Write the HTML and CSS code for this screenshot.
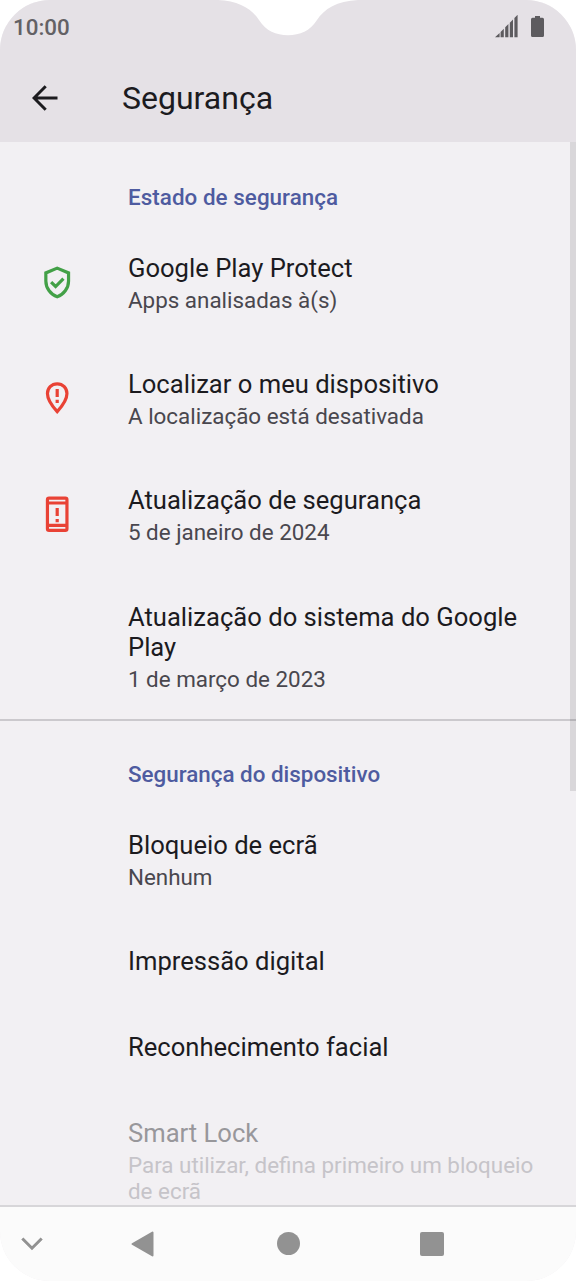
FILE: index.html
```html
<!DOCTYPE html>
<html lang="pt">
<head>
<meta charset="utf-8">
<title>Segurança</title>
<link rel="stylesheet" href="styles.css">
</head>
<body>
<div class="phone">
  <header class="top">
    <div class="status">
      <span class="clock">10:00</span>
      <svg class="signal" width="24" height="24" viewBox="0 0 24 24"><path d="M0 23.2L4.6 19V23.2ZM5.6 18L8.8 14.8V23.2H5.6ZM10.2 13.3L13.4 10V23.2H10.2ZM14.8 8.7L18 5.5V23.2H14.8ZM19.4 4L22.6.8V23.2H19.4Z"/></svg>
      <svg class="battery" width="13" height="22" viewBox="0 0 13 22"><path d="M4 0h5v1.8h2.5Q13 2 13 3.5V19.5Q13 21 11.5 21h-10Q0 21 0 19.5V3.5Q0 2 1.5 1.8H4Z"/></svg>
    </div>
    <div class="appbar">
      <svg class="back" width="26" height="26" viewBox="0 0 26 26"><path d="M25.5 13H2M13.7 1.3L2 13L13.7 24.7"/></svg>
      <h1 class="heading">Segurança</h1>
    </div>
    <svg class="notch" width="140" height="36" viewBox="0 0 140 36"><path d="M0 0C21 1 34 9 41 20C48 31 58 35.2 70 35.2C82 35.2 92 31 99 20C106 9 119 1 140 0Z"/></svg>
  </header>
  <main class="list">
    <section class="group status-group">
      <h2 class="category">Estado de segurança</h2>
      <div class="row">
        <svg class="icon ok" width="38.4" height="38.4" viewBox="0 0 24 24"><path d="M12 3L4.9 6V11C4.9 15.5 8 19.6 12 20.9C16 19.6 19.1 15.5 19.1 11V6Z" transform="translate(0 .2)"/><path d="M8.2 12L11 14.7L15.9 9.8"/></svg>
        <div class="text"><div class="title">Google Play Protect</div><div class="summary">Apps analisadas à(s)</div></div>
      </div>
      <div class="row">
        <svg class="icon bad" width="38.4" height="38.4" viewBox="0 0 24 24"><path d="M12 3C8.4 3 5.9 5.8 5.9 9.1C5.9 12.6 8.4 16.5 12 20.4C15.6 16.5 18.1 12.6 18.1 9.1C18.1 5.8 15.6 3 12 3ZM12 6.3V11.3M12 13V15"/></svg>
        <div class="text"><div class="title">Localizar o meu dispositivo</div><div class="summary">A localização está desativada</div></div>
      </div>
      <div class="row">
        <svg class="icon bad" width="38.4" height="38.4" viewBox="0 0 24 24"><rect x="5.9" y="1.9" width="12.2" height="20.2" rx="1"/><path d="M6 5H18M6 19H18M12 8.1V13.1M12 15V17"/></svg>
        <div class="text"><div class="title">Atualização de segurança</div><div class="summary">5 de janeiro de 2024</div></div>
      </div>
      <div class="row">
        <div class="text"><div class="title">Atualização do sistema do Google Play</div><div class="summary">1 de março de 2023</div></div>
      </div>
    </section>
    <section class="group device">
      <h2 class="category">Segurança do dispositivo</h2>
      <div class="row"><div class="text"><div class="title">Bloqueio de ecrã</div><div class="summary">Nenhum</div></div></div>
      <div class="row single"><div class="text"><div class="title">Impressão digital</div></div></div>
      <div class="row single"><div class="text"><div class="title">Reconhecimento facial</div></div></div>
      <div class="row disabled"><div class="text"><div class="title">Smart Lock</div><div class="summary">Para utilizar, defina primeiro um bloqueio de ecrã</div></div></div>
    </section>
    <div class="scrollbar"></div>
  </main>
  <nav class="nav">
    <svg class="hide" width="22" height="14" viewBox="0 0 22 14"><path d="M1.3 1.5L11 11.2L20.7 1.5"/></svg>
    <svg class="prev" width="24" height="26" viewBox="0 0 24 26"><path d="M1.5 13L21.5 1.5V24.5Z"/></svg>
    <div class="home"></div>
    <div class="recent"></div>
  </nav>
</div>
</body>
</html>
```
FILE: styles.css
```css
* { box-sizing: border-box; }
body { margin: 0; background: #fff; font-family: Roboto, "Liberation Sans", sans-serif; color: #1c1b1f; }
h1, h2 { margin: 0; }
svg { display: block; flex: none; }
.phone { width: 576px; height: 1281px; display: flex; flex-direction: column; overflow: hidden; border-radius: 50px; background: #f2f0f3; }
.top { position: relative; flex: none; height: 142px; background: #e5e1e6; }
.status { display: flex; height: 54px; padding: 0 32px 0 13px; align-items: center; }
.clock { flex: 1; font-size: 22.4px; font-weight: 500; color: #636165; }
.signal { margin: 0 12px 2px 0; fill: #5d5b5f; }
.battery { fill: #5d5b5f; }
.appbar { display: flex; height: 88px; padding-left: 32px; align-items: center; gap: 64px; }
.back { fill: none; stroke: #1c1b1f; stroke-width: 3; }
.heading { font-size: 32px; font-weight: 400; line-height: 38px; }
.notch { position: absolute; left: 218px; top: 0; fill: #fff; }
.list { position: relative; flex: none; height: 1063px; overflow: hidden; }
.category { height: 83px; padding: 42px 0 0 128px; font-size: 22.4px; line-height: 26.4px; font-weight: 500; color: #4e5ba0; }
.status-group { height: 577px; }
.status-group .category { letter-spacing: .05px; }
.device { border-top: 2px solid #cbc9cd; }
.device .category { height: 81px; padding-top: 40px; }
.row { display: flex; align-items: center; padding: 28px 30px 27.8px 38.4px; }
.single { padding-bottom: 27.4px; }
.icon { fill: none; stroke-width: 2; margin: -3px -38.4px 0 0; }
.ok { stroke: #43a047; }
.bad { stroke: #e94235; }
.text { flex: 1; margin-left: 89.6px; }
.title { font-size: 25.6px; line-height: 30.4px; }
.summary { margin-top: 3.6px; font-size: 22.4px; line-height: 26.4px; color: #49474e; }
.disabled .title { color: #98979b; }
.disabled .summary { color: #c6c4c9; }
.scrollbar { position: absolute; right: 0; top: 0; width: 6px; height: 649px; background: rgba(0, 0, 0, .1); }
.nav { position: relative; flex: none; height: 76px; border-top: 2px solid #d7d6d9; background: #fbfbfb; display: flex; align-items: center; padding-left: 21px; }
.hide { fill: none; stroke: #929292; stroke-width: 3; margin-right: 88px; }
.prev { fill: #929292; stroke: #929292; stroke-width: 2; stroke-linejoin: round; }
.home { width: 23px; height: 23px; margin: 0 0 1px 121.5px; border-radius: 50%; background: #929292; }
.recent { width: 24px; height: 24px; margin: 0 0 1px 120.5px; border-radius: 2px; background: #929292; }
```
